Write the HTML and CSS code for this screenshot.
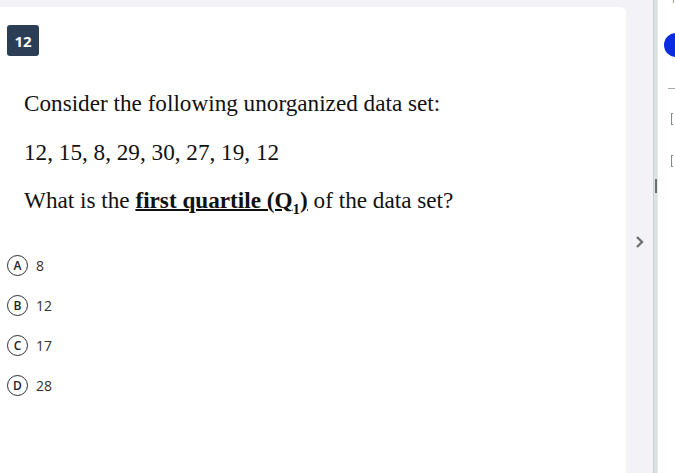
FILE: index.html
```html
<!DOCTYPE html>
<html>
<head>
<meta charset="utf-8">
<link rel="stylesheet" href="styles.css">
</head>
<body>
<div class="page">
  <div class="main">
    <div class="card">
      <div class="badge">12</div>
      <div class="question">
        <p class="q-line">Consider the following unorganized data set:</p>
        <p class="q-line">12, 15, 8, 29, 30, 27, 19, 12</p>
        <p class="q-line last">What is the <b class="u">first quartile (Q<sub>1</sub>)</b> of the data set?</p>
      </div>
      <ul class="options">
        <li class="opt"><span class="letter">A</span><span class="val">8</span></li>
        <li class="opt"><span class="letter">B</span><span class="val">12</span></li>
        <li class="opt"><span class="letter">C</span><span class="val">17</span></li>
        <li class="opt"><span class="letter">D</span><span class="val">28</span></li>
      </ul>
    </div>
    <div class="gutter">
      <svg class="chev" width="10" height="14" viewBox="0 0 10 14"><path d="M2 2 L7 7 L2 12" fill="none" stroke="#6f6f74" stroke-width="2.4"/></svg>
    </div>
  </div>
  <div class="divider"><span class="handle"></span></div>
  <div class="side">
    <span class="side-top">1</span>
    <span class="dot"></span>
    <span class="rule"></span>
    <span class="glyph g1"></span>
    <span class="glyph g2"></span>
  </div>
</div>
</body>
</html>
```
FILE: styles.css
```css
html, body {
  margin: 0;
  padding: 0;
  height: 100%;
  overflow: hidden;
}
body {
  background: #f2f2f7;
  font-family: "Open Sans", sans-serif;
}
.page {
  display: flex;
  height: 473px;
}
.main {
  display: flex;
  width: 653px;
  padding-top: 7px;
  box-sizing: border-box;
}
.card {
  width: 626px;
  background: #fff;
  border-top-right-radius: 6px;
  padding: 18px 0 0 7px;
  box-sizing: border-box;
}
.badge {
  width: 32px;
  height: 31px;
  background: #2c3e55;
  color: #fff;
  border-radius: 3px;
  font-weight: 700;
  font-size: 15px;
  display: flex;
  align-items: center;
  justify-content: center;
}
.question {
  padding-left: 17px;
  padding-top: 33px;
  font-family: "Liberation Serif", serif;
  font-size: 23.2px;
  color: #111;
}
.q-line {
  margin: 0 0 20.5px 0;
  line-height: 28px;
  white-space: nowrap;
}
.q-line.last {
  margin-bottom: 0;
}
.u {
  text-decoration: underline;
  text-decoration-thickness: 2px;
}
.u sub {
  font-size: 15px;
  line-height: 0;
}
.options {
  list-style: none;
  margin: 0;
  padding: 0;
  margin-top: 41px;
}
.opt {
  display: flex;
  align-items: center;
  height: 20px;
  margin-bottom: 20px;
}
.letter {
  width: 19px;
  height: 19px;
  border: 1px solid #2b2b35;
  border-radius: 50%;
  font-size: 12px;
  font-weight: 600;
  color: #222;
  display: flex;
  align-items: center;
  justify-content: center;
  box-sizing: content-box;
  flex: none;
}
.val {
  margin-left: 8px;
  font-size: 14px;
  color: #333;
}
.gutter {
  flex: 1;
  display: flex;
  justify-content: center;
  padding-top: 228px;
}
.chev {
  display: block;
}
.divider {
  width: 5px;
  background: #dbe2e2;
  border-left: 1px solid #c9d0d1;
  border-right: 1px solid #e4e9e9;
  display: flex;
  justify-content: center;
  padding-top: 179px;
  box-sizing: border-box;
}
.handle {
  width: 2px;
  height: 14px;
  background: #6b7071;
}
.side {
  flex: 1;
  background: #fff;
  position: relative;
  overflow: hidden;
}
.side-top {
  position: absolute;
  left: 12px;
  top: -9px;
  font-size: 11px;
  color: #888;
}
.dot {
  position: absolute;
  left: 6px;
  top: 33px;
  width: 24px;
  height: 24px;
  border-radius: 50%;
  background: #0a2ce0;
}
.rule {
  position: absolute;
  left: 10px;
  top: 88px;
  width: 20px;
  height: 1px;
  background: #aaa;
}
.glyph {
  position: absolute;
  left: 13px;
  width: 2px;
  height: 12px;
  border-left: 1px solid #888;
  border-top: 1px solid #888;
  border-bottom: 1px solid #888;
  box-sizing: border-box;
}
.g1 { top: 113px; }
.g2 { top: 155px; }
```
